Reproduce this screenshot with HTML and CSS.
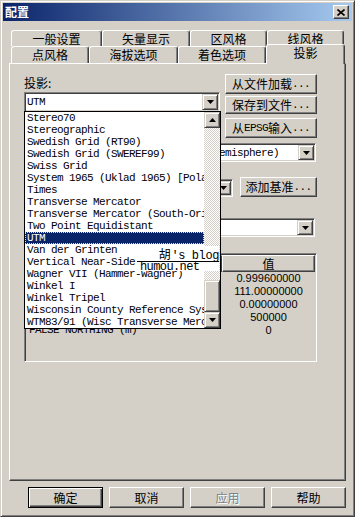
FILE: index.html
```html
<!DOCTYPE html>
<html>
<head>
<meta charset="utf-8">
<link rel="stylesheet" href="styles.css">
</head>
<body>
<div class="window">
  <div class="titlebar">
    <span class="title">配置</span>
    <span class="close"><svg width="8" height="7" viewBox="0 0 8 7"><path d="M0.5 0.5 L7.5 6.5 M7.5 0.5 L0.5 6.5" stroke="#000" stroke-width="1.6" fill="none"/></svg></span>
  </div>
  <div class="tabs">
    <div class="tabrow back">
      <div class="tab t1">一般设置</div>
      <div class="tab t2">矢量显示</div>
      <div class="tab t3">区风格</div>
      <div class="tab t4">线风格</div>
    </div>
    <div class="tabrow front">
      <div class="tab f1">点风格</div>
      <div class="tab f2">海拔选项</div>
      <div class="tab f3">着色选项</div>
      <div class="tab f4 selected">投影</div>
    </div>
  </div>
  <div class="panel">
    <div class="top">
      <div class="left">
        <div class="label">投影:</div>
        <div class="combo c1">
          <div class="ctext">UTM</div>
          <div class="carrow"><svg width="7" height="4" viewBox="0 0 7 4"><path d="M0 0H7L3.5 4Z" fill="#000"/></svg></div>
          <div class="dropdown">
            <div class="items">
              <div class="item">Stereo70</div>
              <div class="item">Stereographic</div>
              <div class="item">Swedish Grid (RT90)</div>
              <div class="item">Swedish Grid (SWEREF99)</div>
              <div class="item">Swiss Grid</div>
              <div class="item">System 1965 (Uklad 1965) [Poland]</div>
              <div class="item">Times</div>
              <div class="item">Transverse Mercator</div>
              <div class="item">Transverse Mercator (South-Oriented)</div>
              <div class="item">Two Point Equidistant</div>
              <div class="item sel">UTM</div>
              <div class="item">Van der Grinten</div>
              <div class="item">Vertical Near-Side Perspective</div>
              <div class="item">Wagner VII (Hammer-Wagner)</div>
              <div class="item">Winkel I</div>
              <div class="item">Winkel Tripel</div>
              <div class="item">Wisconsin County Reference System</div>
              <div class="item">WTM83/91 (Wisc Transverse Mercator)</div>
            </div>
            <div class="sb">
              <div class="sbbtn"><svg width="7" height="4" viewBox="0 0 7 4"><path d="M0 4H7L3.5 0Z" fill="#000"/></svg></div>
              <div class="track"><div class="thumb"></div></div>
              <div class="sbbtn"><svg width="7" height="4" viewBox="0 0 7 4"><path d="M0 0H7L3.5 4Z" fill="#000"/></svg></div>
            </div>
          </div>
        </div>
      </div>
      <div class="right">
        <div class="btn rb1">从文件加载<span class="mono">...</span></div>
        <div class="btn rb2">保存到文件<span class="mono">...</span></div>
        <div class="btn rb3">从<span class="mono">EPSG</span>输入<span class="mono">...</span></div>
      </div>
    </div>
    <div class="combo c2">
      <div class="ctext">WGS84 / UTM zone 50N (Northern Hemisphere)</div>
      <div class="carrow"><svg width="7" height="4" viewBox="0 0 7 4"><path d="M0 0H7L3.5 4Z" fill="#000"/></svg></div>
    </div>
    <div class="rowc">
      <div class="combo c3">
        <div class="ctext">WGS 84</div>
        <div class="carrow"><svg width="7" height="4" viewBox="0 0 7 4"><path d="M0 0H7L3.5 4Z" fill="#000"/></svg></div>
      </div>
      <div class="btn addbtn">添加基准<span class="mono">...</span></div>
    </div>
    <div class="combo c4">
      <div class="ctext"></div>
      <div class="carrow"><svg width="7" height="4" viewBox="0 0 7 4"><path d="M0 0H7L3.5 4Z" fill="#000"/></svg></div>
    </div>
    <div class="table">
      <div class="thead">
        <div class="thl">参数</div>
        <div class="thr">值</div>
      </div>
      <div class="tr"><div class="tdl">SCALE FACTOR</div><div class="tdr">0.999600000</div></div>
      <div class="tr"><div class="tdl">CENTRAL MERIDIAN</div><div class="tdr">111.00000000</div></div>
      <div class="tr"><div class="tdl">LATITUDE OF ORIGIN</div><div class="tdr">0.00000000</div></div>
      <div class="tr"><div class="tdl">FALSE EASTING (m)</div><div class="tdr">500000</div></div>
      <div class="tr"><div class="tdl">FALSE NORTHING (m)</div><div class="tdr">0</div></div>
    </div>
  </div>
  <div class="footer">
    <div class="btn fbtn default">确定</div>
    <div class="btn fbtn">取消</div>
    <div class="btn fbtn disabled">应用</div>
    <div class="btn fbtn">帮助</div>
  </div>
  <div class="wm">
    <div class="wmtop"><span class="hu">胡</span>'s blog</div>
    <div class="wmbot"><span>humou.net</span></div>
  </div>
</div>
</body>
</html>
```
FILE: styles.css
```css
* { box-sizing: border-box; }
body {
  margin: 0;
  background: #d4d0c8;
  font-family: "Noto Sans CJK SC", sans-serif;
  font-size: 12px;
  color: #000;
}
.mono {
  font-family: "Liberation Mono", monospace;
  font-size: 11px;
  letter-spacing: -0.6px;
}
.window {
  position: relative;
  width: 355px;
  height: 517px;
  background: #d4d0c8;
  border: 1px solid;
  border-color: #d4d0c8 #404040 #404040 #d4d0c8;
  box-shadow: inset 1px 1px #fff, inset -1px -1px #808080;
  padding: 2px;
}
.titlebar {
  height: 18px;
  background: linear-gradient(to right, #0a246a, #a6caf0);
  display: flex;
  align-items: center;
  justify-content: space-between;
  padding: 0 3px 0 2px;
}
.title {
  color: #fff;
  font-weight: bold;
  font-size: 12px;
  line-height: 18px;
}
.close {
  width: 16px;
  height: 14px;
  background: #d4d0c8;
  border: 1px solid;
  border-color: #fff #404040 #404040 #fff;
  box-shadow: inset -1px -1px #808080;
  display: flex;
  align-items: center;
  justify-content: center;
}
.tabs {
  margin-top: 9px;
  margin-left: 8px;
  height: 33px;
}
.tabrow { display: flex; }
.tabrow.back { height: 16px; }
.tabrow.front { height: 17px; }
.tab {
  height: 100%;
  background: #d4d0c8;
  border-top: 1px solid #fff;
  border-left: 1px solid #fff;
  border-right: 1px solid #404040;
  box-shadow: inset -1px 0 #808080;
  border-radius: 3px 3px 0 0;
  text-align: center;
  white-space: nowrap;
}
.back .tab { line-height: 15px; }
.front .tab { line-height: 16px; }
.t1 { width: 91px; }
.t2 { width: 88px; }
.t3 { width: 77px; }
.t4 { width: 77px; }
.f1 { width: 78px; }
.f2 { width: 89px; }
.f3 { width: 88px; }
.f4 { width: 79px; }
.tab.selected {
  position: relative;
  z-index: 2;
  margin-top: -2px;
  height: 20px;
}
.panel {
  margin-left: 6px;
  width: 337px;
  height: 418px;
  border: 1px solid;
  border-color: #fff #404040 #404040 #fff;
  box-shadow: inset -1px -1px #808080;
  padding: 10px 0 0 14px;
}
.top { display: flex; height: 64px; }
.left { width: 196px; }
.label { height: 18px; line-height: 18px; }
.right {
  margin-left: 5px;
  width: 92px;
  display: flex;
  flex-direction: column;
}
.btn {
  background: #d4d0c8;
  border: 1px solid;
  border-color: #fff #404040 #404040 #fff;
  box-shadow: inset -1px -1px #808080;
  display: flex;
  align-items: center;
  justify-content: center;
  white-space: nowrap;
  line-height: 14px;
}
.rb1 { height: 20px; }
.rb2 { height: 18px; margin-top: 2px; }
.rb3 { height: 20px; margin-top: 4px; }
.combo {
  position: relative;
  display: flex;
  background: #fff;
  border: 1px solid;
  border-color: #808080 #fff #fff #808080;
  box-shadow: inset 1px 1px #404040, inset -1px -1px #d4d0c8;
  padding: 1px;
}
.ctext {
  flex: 1;
  overflow: hidden;
  white-space: nowrap;
  padding-left: 1px;
  font-family: "Liberation Mono", monospace;
  font-size: 11px;
  letter-spacing: -0.6px;
  display: flex;
  align-items: center;
}
.carrow {
  width: 16px;
  flex: none;
  background: #d4d0c8;
  border: 1px solid;
  border-color: #d4d0c8 #404040 #404040 #d4d0c8;
  box-shadow: inset 1px 1px #fff, inset -1px -1px #808080;
  display: flex;
  align-items: center;
  justify-content: center;
}
.c1 { height: 20px; width: 196px; }
.c2 { height: 19px; width: 292px; margin-top: 5px; }
.rowc { display: flex; align-items: flex-start; margin-top: 15px; }
.c3 { height: 18px; width: 209px; margin-top: 2px; }
.addbtn { width: 77px; height: 20px; margin-left: 7px; }
.c4 { height: 19px; width: 291px; margin-top: 21px; }
.dropdown {
  position: absolute;
  top: 100%;
  left: -1px;
  width: 197px;
  height: 218px;
  border: 1px solid #000;
  background: #fff;
  display: flex;
  z-index: 5;
}
.items { flex: 1; overflow: hidden; }
.item {
  height: 12px;
  line-height: 12px;
  padding-left: 2px;
  white-space: nowrap;
  overflow: hidden;
  font-family: "Liberation Mono", monospace;
  font-size: 11px;
  letter-spacing: -0.6px;
}
.item.sel {
  background: #0a246a;
  color: #fff;
  outline: 1px dotted #f5db95;
  outline-offset: -1px;
}
.sb {
  width: 16px;
  flex: none;
  display: flex;
  flex-direction: column;
  background: repeating-conic-gradient(#fff 0 25%, #d4d0c8 0 50%) 0 0 / 2px 2px;
}
.sbbtn, .thumb {
  height: 16px;
  flex: none;
  background: #d4d0c8;
  border: 1px solid;
  border-color: #d4d0c8 #404040 #404040 #d4d0c8;
  box-shadow: inset 1px 1px #fff, inset -1px -1px #808080;
  display: flex;
  align-items: center;
  justify-content: center;
}
.track { flex: 1; display: flex; flex-direction: column; justify-content: flex-end; }
.thumb { height: 32px; }
.table {
  margin-top: 16px;
  width: 293px;
  height: 109px;
  border: 1px solid;
  border-color: #808080 #fff #fff #808080;
  box-shadow: inset 1px 1px #404040, inset -1px -1px #d4d0c8;
  padding: 1px;
  background: #d4d0c8;
}
.thead { display: flex; height: 17px; }
.thl, .thr {
  background: #d4d0c8;
  border: 1px solid;
  border-color: #fff #404040 #404040 #fff;
  box-shadow: inset -1px -1px #808080;
  text-align: center;
  line-height: 15px;
}
.thl { width: 196px; }
.thr { flex: 1; }
.tr { display: flex; height: 13px; line-height: 13px; }
.tdl {
  width: 196px;
  padding-left: 3px;
  font-family: "Liberation Mono", monospace;
  font-size: 11px;
  letter-spacing: -0.6px;
  white-space: nowrap;
}
.tdr {
  flex: 1;
  text-align: center;
  font-family: "Liberation Sans", sans-serif;
  font-size: 11px;
}
.footer {
  display: flex;
  justify-content: flex-end;
  gap: 6px;
  margin-top: 6px;
  padding-right: 6px;
}
.fbtn { width: 75px; height: 21px; }
.fbtn.default {
  border-color: #000;
  box-shadow: inset 1px 1px #fff, inset -1px -1px #404040, inset -2px -2px #808080;
}
.fbtn.disabled { color: #808080; text-shadow: 1px 1px #fff; }
.wm {
  position: absolute;
  left: 136px;
  top: 245px;
  width: 82px;
  height: 25px;
  background: #fff;
  z-index: 10;
}
.wmtop {
  height: 16px;
  border-bottom: 1px solid #000;
  text-align: right;
  line-height: 15px;
  font-family: "Liberation Mono", monospace;
  font-size: 12px;
  letter-spacing: -0.4px;
  white-space: nowrap;
}
.hu { font-family: "Noto Sans CJK SC", sans-serif; font-size: 12px; margin-right: 1px; }
.wmbot {
  height: 8px;
  overflow: hidden;
  padding-left: 3px;
  font-family: "Liberation Mono", monospace;
  font-size: 12px;
  letter-spacing: -0.6px;
  line-height: 10px;
  white-space: nowrap;
}
```
